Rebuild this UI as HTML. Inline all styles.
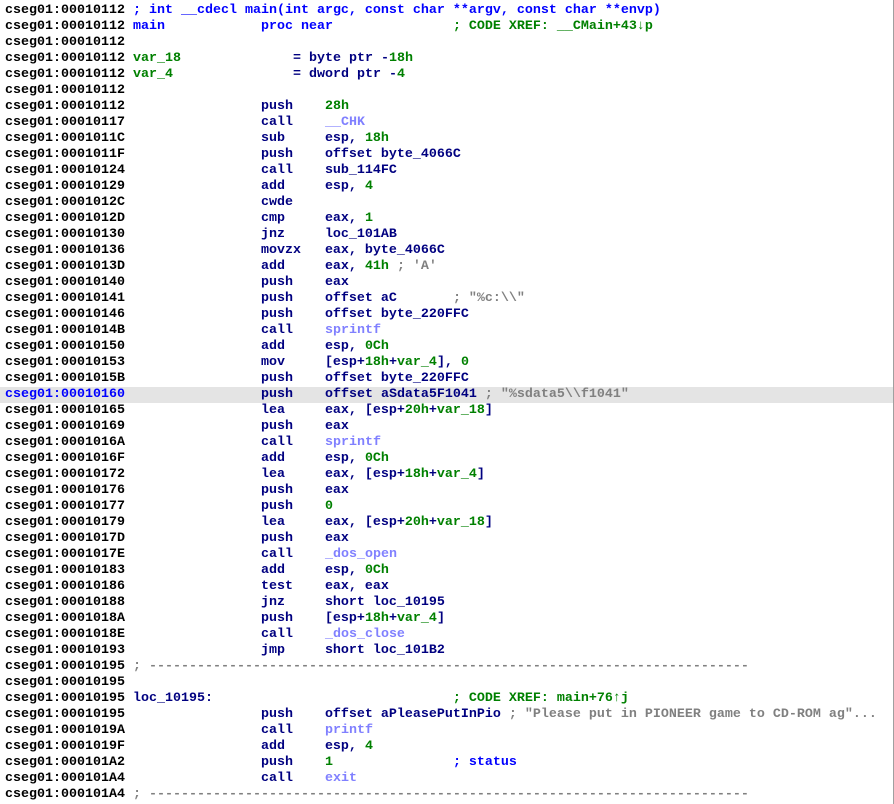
<!DOCTYPE html>
<html><head><meta charset="utf-8"><style>
html,body{margin:0;padding:0;background:#fff;width:894px;height:804px;overflow:hidden}
pre{margin:0;padding:3px 0 0 5px;font-family:"Liberation Mono",monospace;font-weight:bold;font-size:13.333px;line-height:16px;color:#000;white-space:pre}
.m{color:#000080}.b{color:#0000ff}.g{color:#008000}.f{color:#8080ff}.s{color:#808080}
.hl{background:#e4e4e4;display:inline-block;width:889px;margin-left:-5px;padding-left:5px}
.r{position:absolute;right:0;top:0;width:1px;height:804px;background:#a0a0a0}
</style></head><body><div class="r"></div><pre>cseg01:00010112 <span class="b">; int __cdecl main(int argc, const char **argv, const char **envp)</span>
cseg01:00010112 <span class="b">main            proc near</span>               <span class="g">; CODE XREF: __CMain+43↓p</span>
cseg01:00010112
cseg01:00010112 <span class="g">var_18</span>              <span class="m">= byte ptr -</span><span class="g">18h</span>
cseg01:00010112 <span class="g">var_4</span>               <span class="m">= dword ptr -</span><span class="g">4</span>
cseg01:00010112
cseg01:00010112                 <span class="m">push    </span><span class="g">28h</span>
cseg01:00010117                 <span class="m">call    </span><span class="f">__CHK</span>
cseg01:0001011C                 <span class="m">sub     esp, </span><span class="g">18h</span>
cseg01:0001011F                 <span class="m">push    offset byte_4066C</span>
cseg01:00010124                 <span class="m">call    sub_114FC</span>
cseg01:00010129                 <span class="m">add     esp, </span><span class="g">4</span>
cseg01:0001012C                 <span class="m">cwde</span>
cseg01:0001012D                 <span class="m">cmp     eax, </span><span class="g">1</span>
cseg01:00010130                 <span class="m">jnz     loc_101AB</span>
cseg01:00010136                 <span class="m">movzx   eax, byte_4066C</span>
cseg01:0001013D                 <span class="m">add     eax, </span><span class="g">41h</span> <span class="s">; 'A'</span>
cseg01:00010140                 <span class="m">push    eax</span>
cseg01:00010141                 <span class="m">push    offset aC</span>       <span class="s">; "%c:\\"</span>
cseg01:00010146                 <span class="m">push    offset byte_220FFC</span>
cseg01:0001014B                 <span class="m">call    </span><span class="f">sprintf</span>
cseg01:00010150                 <span class="m">add     esp, </span><span class="g">0Ch</span>
cseg01:00010153                 <span class="m">mov     [esp+</span><span class="g">18h</span><span class="m">+</span><span class="g">var_4</span><span class="m">], </span><span class="g">0</span>
cseg01:0001015B                 <span class="m">push    offset byte_220FFC</span>
<span class="hl"><span class="b">cseg01:00010160</span>                 <span class="m">push    offset aSdata5F1041</span> <span class="s">; "%sdata5\\f1041"</span></span>
cseg01:00010165                 <span class="m">lea     eax, [esp+</span><span class="g">20h</span><span class="m">+</span><span class="g">var_18</span><span class="m">]</span>
cseg01:00010169                 <span class="m">push    eax</span>
cseg01:0001016A                 <span class="m">call    </span><span class="f">sprintf</span>
cseg01:0001016F                 <span class="m">add     esp, </span><span class="g">0Ch</span>
cseg01:00010172                 <span class="m">lea     eax, [esp+</span><span class="g">18h</span><span class="m">+</span><span class="g">var_4</span><span class="m">]</span>
cseg01:00010176                 <span class="m">push    eax</span>
cseg01:00010177                 <span class="m">push    </span><span class="g">0</span>
cseg01:00010179                 <span class="m">lea     eax, [esp+</span><span class="g">20h</span><span class="m">+</span><span class="g">var_18</span><span class="m">]</span>
cseg01:0001017D                 <span class="m">push    eax</span>
cseg01:0001017E                 <span class="m">call    </span><span class="f">_dos_open</span>
cseg01:00010183                 <span class="m">add     esp, </span><span class="g">0Ch</span>
cseg01:00010186                 <span class="m">test    eax, eax</span>
cseg01:00010188                 <span class="m">jnz     short loc_10195</span>
cseg01:0001018A                 <span class="m">push    [esp+</span><span class="g">18h</span><span class="m">+</span><span class="g">var_4</span><span class="m">]</span>
cseg01:0001018E                 <span class="m">call    </span><span class="f">_dos_close</span>
cseg01:00010193                 <span class="m">jmp     short loc_101B2</span>
cseg01:00010195 <span class="s">; ---------------------------------------------------------------------------</span>
cseg01:00010195
cseg01:00010195 <span class="m">loc_10195:</span>                              <span class="g">; CODE XREF: main+76↑j</span>
cseg01:00010195                 <span class="m">push    offset aPleasePutInPio</span> <span class="s">; "Please put in PIONEER game to CD-ROM ag"...</span>
cseg01:0001019A                 <span class="m">call    </span><span class="f">printf</span>
cseg01:0001019F                 <span class="m">add     esp, </span><span class="g">4</span>
cseg01:000101A2                 <span class="m">push    </span><span class="g">1</span>               <span class="b">; status</span>
cseg01:000101A4                 <span class="m">call    </span><span class="f">exit</span>
cseg01:000101A4 <span class="s">; ---------------------------------------------------------------------------</span>
</pre></body></html>
